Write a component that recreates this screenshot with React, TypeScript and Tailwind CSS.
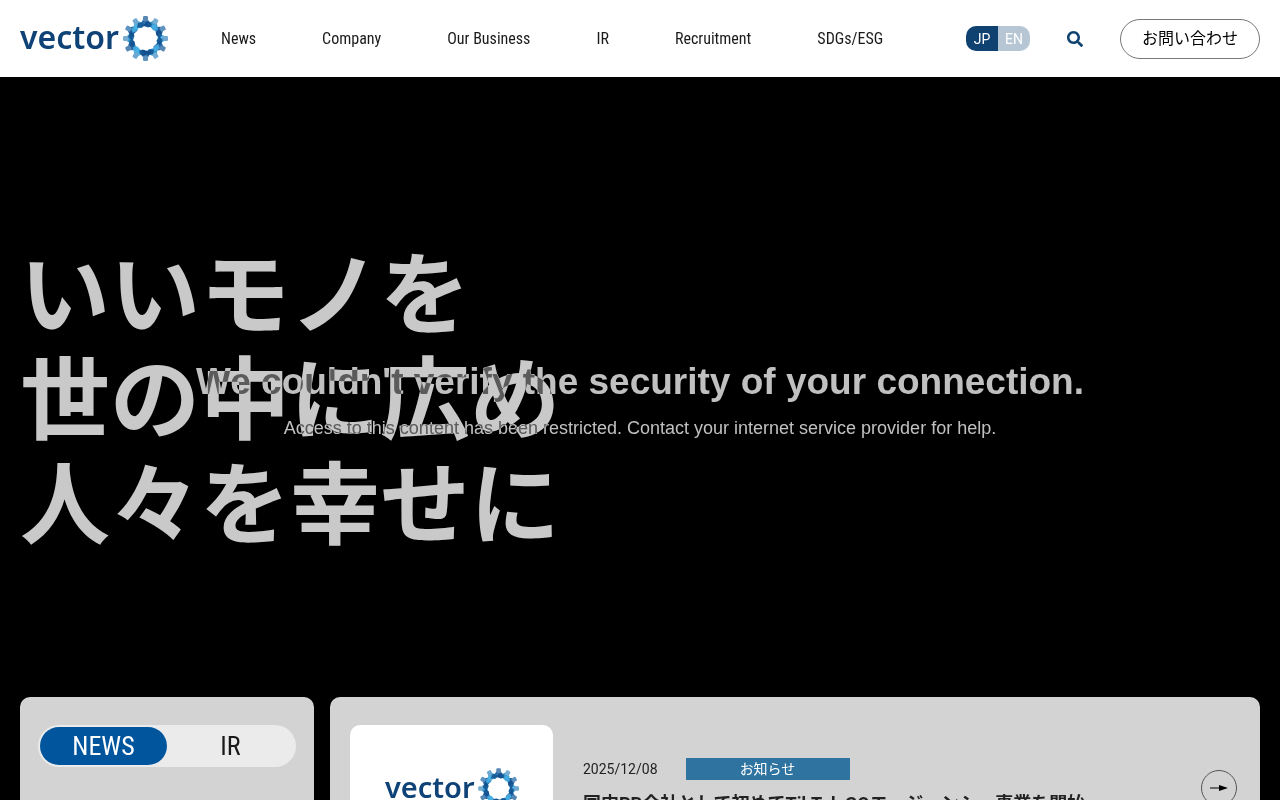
import React from "react";
import { FaSearch } from "react-icons/fa";

const navItems = ["News", "Company", "Our Business", "IR", "Recruitment", "SDGs/ESG"];
const knobs = ["#5787b4", "#78add2", "#5f93c0", "#6fa9d2"];
const bodies = ["#2467a8", "#3598d0", "#1d5c9b", "#4fb4e4"];

function Logo({ className }: { className: string }) {
  return (
    <svg viewBox="0 0 148 46" className={className} role="img" aria-label="vector">
      <text x="0" y="33" fontFamily="'Noto Sans', sans-serif" fontWeight="600" fontSize="32" fill="#0f4378">
        vector
      </text>
      <g transform="translate(125.500 22.500)">
        {Array.from({ length: 12 }, (_, i) => (
          <g key={i} transform={`rotate(${i * 30})`}>
            <path d="M-2.500-19L2.500-18.500L7-13.500L3-11L-5.500-13.500Z" fill={bodies[i % 4]} />
            <rect x="-2.500" y="-22.500" width="5" height="5.500" rx="1.200" fill={knobs[i % 4]} />
          </g>
        ))}
        {Array.from({ length: 12 }, (_, i) => (
          <path
            key={i}
            transform={`rotate(${i * 30 + 14})`}
            d="M-3-17L1.500-16.500L4-13L-1-11.500L-5-13Z"
            fill={i % 3 === 1 ? "#48b1e5" : "#124f8c"}
            opacity="0.85"
          />
        ))}
      </g>
    </svg>
  );
}

function Header() {
  return (
    <header className="flex h-[77px] shrink-0 items-center bg-white px-5">
      <a href="#top" className="shrink-0">
        <Logo className="h-[46px] w-[148px]" />
      </a>
      <nav className="ml-[53px] flex gap-[66px] font-['Roboto_Condensed','Roboto',sans-serif] text-base text-[#1a1a1a]">
        {navItems.map((item) => (
          <a key={item} href="#top" className="whitespace-nowrap">
            {item}
          </a>
        ))}
      </nav>
      <div className="ml-auto flex items-center">
        <div className="flex h-[25px] w-16 overflow-hidden rounded-[10px] text-sm text-white">
          <a href="#jp" className="flex flex-1 items-center justify-center bg-[#0f4270]">JP</a>
          <a href="#en" className="flex flex-1 items-center justify-center bg-[#b7c6d4]">EN</a>
        </div>
        <button type="button" aria-label="検索" className="ml-[37px] text-[#0f4270]">
          <FaSearch size={16} />
        </button>
        <a
          href="#contact"
          className="ml-[37px] flex h-10 w-[140px] items-center justify-center rounded-full border border-[#777] text-base text-black"
        >
          お問い合わせ
        </a>
      </div>
    </header>
  );
}

function Notice() {
  return (
    <div className="pointer-events-none absolute inset-0 flex flex-col items-center justify-center text-center font-['Liberation_Sans',sans-serif] text-[#c0c0c0] mix-blend-exclusion">
      <h2 className="text-[37px] leading-12 font-bold whitespace-nowrap">
        We couldn't verify the security of your connection.
      </h2>
      <p className="mt-2 text-lg whitespace-nowrap">
        Access to this content has been restricted. Contact your internet service provider for help.
      </p>
    </div>
  );
}

function Cards() {
  return (
    <div className="flex h-[103px] shrink-0 gap-4 overflow-hidden px-5">
      <section className="w-[294px] shrink-0 rounded-t-[10px] bg-[#d3d3d3] px-[18px] pt-7">
        <div className="flex h-[42px] items-center rounded-full bg-[#ebebeb] px-[2px] font-['Roboto_Condensed','Roboto',sans-serif] text-[26px] leading-none">
          <button type="button" className="h-[38px] flex-1 rounded-full bg-[#00559d] text-white">NEWS</button>
          <button type="button" className="h-[38px] flex-1 text-[#1a1a1a]">IR</button>
        </div>
      </section>
      <section className="flex min-w-0 flex-1 rounded-t-[10px] bg-[#d3d3d3] pt-7 pr-[23px] pl-5">
        <div className="flex h-32 w-[203px] shrink-0 items-center justify-center rounded-[10px] bg-white">
          <Logo className="h-[42px] w-[134px]" />
        </div>
        <div className="mt-[33px] ml-[30px] flex-1">
          <div className="flex items-center gap-7">
            <time className="text-sm text-[#222]">2025/12/08</time>
            <span className="flex h-[22px] w-[164px] items-center justify-center bg-[#2f73a0] text-sm text-white">お知らせ</span>
          </div>
          <h3 className="mt-2 text-lg leading-8 font-bold whitespace-nowrap text-[#222]">
            国内PR会社として初めてTikTok GOエージェンシー事業を開始
          </h3>
        </div>
        <a href="#article" aria-label="詳細" className="mt-[45px] flex size-9 shrink-0 items-center justify-center rounded-full border border-[#555]">
          <svg viewBox="0 0 18 8" className="h-2 w-[18px]">
            <path d="M0 3.500H9V1L18 4L9 7V4.500H0Z" fill="#000" />
          </svg>
        </a>
      </section>
    </div>
  );
}

export default function App() {
  return (
    <div className="relative flex h-screen flex-col overflow-hidden bg-black font-['Roboto','Noto_Sans_CJK_JP',sans-serif]">
      <Header />
      <main className="flex min-h-0 flex-1 flex-col">
        <div className="flex min-h-0 flex-1 items-center px-5 pt-7">
          <h1 className="text-[90px] leading-[105px] font-bold whitespace-nowrap text-[#c9c9c9]">
            いいモノを
            <br />
            世の中に広め
            <br />
            人々を幸せに
          </h1>
        </div>
        <Cards />
      </main>
      <Notice />
    </div>
  );
}
